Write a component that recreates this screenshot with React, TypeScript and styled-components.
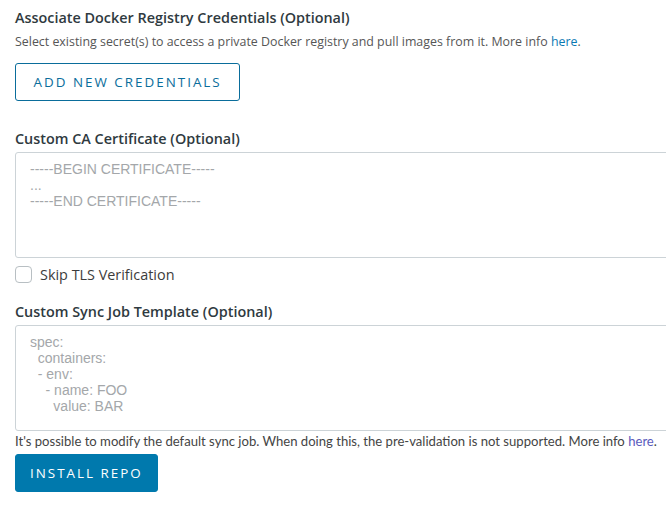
import React from "react";
import styled, { createGlobalStyle } from "styled-components";

const Global = createGlobalStyle`
  html, body { margin: 0; padding: 0; background: #fff; overflow: hidden; }
  body { font-family: "Open Sans", "Noto Sans", sans-serif; color: #313131; }
`;

const Page = styled.div`
  padding: 8px 0 0 15px;
  display: flex;
  flex-direction: column;
  width: 680px;
`;

const Section = styled.section<{ $gap?: number }>`
  display: flex;
  flex-direction: column;
  margin-bottom: ${(p) => p.$gap ?? 0}px;
`;

const Label = styled.h3<{ $tight?: boolean }>`
  margin: 0 0 ${(p) => (p.$tight ? 3 : 5)}px;
  font-size: 14.4px;
  line-height: 20px;
  font-weight: 600;
  color: #2f3a40;
`;

const Help = styled.p<{ $narrow?: boolean }>`
  margin: ${(p) => (p.$narrow ? "1px 0 0" : "0")};
  font-size: ${(p) => (p.$narrow ? "13.1px" : "12.4px")};
  font-family: ${(p) => (p.$narrow ? `"Lato", "Open Sans", sans-serif` : `"Open Sans", sans-serif`)};
  line-height: 18px;
  color: ${(p) => (p.$narrow ? "#444" : "#565656")};
  white-space: nowrap;
`;

const Link = styled.a<{ $visited?: boolean }>`
  color: ${(p) => (p.$visited ? "#5b5bbd" : "#0b79b3")};
  text-decoration: none;
`;

const Button = styled.button<{ $primary?: boolean }>`
  align-self: flex-start;
  height: 38px;
  padding: 0 ${(p) => (p.$primary ? 14 : 17.5)}px;
  border-radius: 3px;
  border: 1px solid ${(p) => (p.$primary ? "#0079ad" : "#0a6d9b")};
  background: ${(p) => (p.$primary ? "#0079ad" : "#fff")};
  color: ${(p) => (p.$primary ? "#fff" : "#0a6d9b")};
  font-family: "Open Sans", sans-serif;
  font-size: 13.4px;
  font-weight: 500;
  letter-spacing: 0.15em;
  text-transform: uppercase;
  cursor: pointer;
`;

const TextArea = styled.textarea`
  box-sizing: border-box;
  width: 670px;
  height: 106px;
  margin: 0;
  padding: 8px 14px;
  border: 1px solid #ccd3d7;
  border-radius: 3px;
  resize: none;
  font-family: "Liberation Sans", Arial, sans-serif;
  font-size: 14px;
  line-height: 16px;
  color: #333;
  &::placeholder { color: #a4a7aa; }
`;

const CheckRow = styled.label`
  display: flex;
  align-items: center;
  gap: 8px;
  height: 17px;
  margin: 8px 0 0;
  font-size: 14.4px;
  color: #3c3c3c;
`;

const Box = styled.span`
  box-sizing: border-box;
  width: 17px;
  height: 17px;
  border: 1px solid #b8bfc3;
  border-radius: 4px;
  background: #fff;
`;

export default function App() {
  return (
    <>
      <Global />
      <Page>
        <Section $gap={12}>
          <Label>Associate Docker Registry Credentials (Optional)</Label>
          <Help>
            Select existing secret(s) to access a private Docker registry and pull images from it. More info{" "}
            <Link href="#">here</Link>.
          </Help>
        </Section>
        <Section $gap={28}>
          <Button>Add New Credentials</Button>
        </Section>
        <Section $gap={19}>
          <Label $tight>Custom CA Certificate (Optional)</Label>
          <TextArea placeholder={"-----BEGIN CERTIFICATE-----\n...\n-----END CERTIFICATE-----"} />
          <CheckRow>
            <Box />
            Skip TLS Verification
          </CheckRow>
        </Section>
        <Section $gap={4}>
          <Label $tight>Custom Sync Job Template (Optional)</Label>
          <TextArea placeholder={"spec:\n  containers:\n  - env:\n    - name: FOO\n      value: BAR"} />
          <Help $narrow>
            It's possible to modify the default sync job. When doing this, the pre-validation is not supported. More info{" "}
            <Link href="#" $visited>here</Link>.
          </Help>
        </Section>
        <Button $primary>Install Repo</Button>
      </Page>
    </>
  );
}
